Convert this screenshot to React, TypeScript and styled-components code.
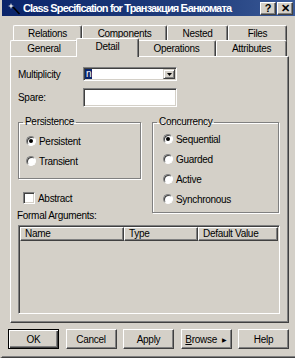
import styled, { createGlobalStyle } from 'styled-components'
import { FC, ReactNode } from 'react'

const FACE = '#d4d0c8'
const SHADOW = '#808080'
const DARK = '#404040'
const LIGHT = '#ffffff'

const GlobalStyle = createGlobalStyle`
  html, body {
    margin: 0;
    padding: 0;
    background: ${FACE};
    overflow: hidden;
  }
`

const Window = styled.div`
  width: 295px;
  height: 358px;
  box-sizing: border-box;
  background: ${FACE};
  border-left: 2px solid ${FACE};
  border-bottom: 1px solid ${DARK};
  box-shadow: inset 0 -1px ${SHADOW};
  display: flex;
  flex-direction: column;
  font-family: "Liberation Sans", Arial, sans-serif;
  font-size: 10px;
  letter-spacing: -0.3px;
  color: #000;
`

const TitleBar = styled.div`
  height: 16px;
  display: flex;
  align-items: center;
  padding: 0 2px 0 6px;
  background: linear-gradient(90deg, #0a246a 0%, #23407e 70%, #3a5a98 100%);
  color: #fff;
`

const TitleText = styled.span`
  flex: 1;
  margin-left: 2px;
  font-size: 11px;
  font-weight: bold;
  letter-spacing: -0.85px;
  white-space: nowrap;
  overflow: hidden;
`

const CaptionButtons = styled.div`
  display: flex;
  gap: 1px;
`

const CaptionButton = styled.div`
  width: 16px;
  height: 13px;
  box-sizing: border-box;
  background: ${FACE};
  border: 1px solid;
  border-color: ${LIGHT} ${DARK} ${DARK} ${LIGHT};
  box-shadow: inset -1px -1px ${SHADOW};
  display: flex;
  align-items: center;
  justify-content: center;
  color: #000;
  font-size: 11px;
  font-weight: bold;
  letter-spacing: 0;
  line-height: 1;
`

const Body = styled.div`
  display: flex;
  flex-direction: column;
  padding-top: 9px;
`

const TabRow = styled.div<{ $indent: number }>`
  display: flex;
  margin-left: ${({ $indent }) => $indent}px;
  height: ${({ $indent }) => ($indent > 10 ? 15 : 16)}px;
`

const Tab = styled.div<{ $width: number; $active?: boolean }>`
  width: ${({ $width, $active }) => $width + ($active ? 4 : 0)}px;
  flex: none;
  box-sizing: border-box;
  height: ${({ $active }) => ($active ? 19 : 16)}px;
  margin: ${({ $active }) => ($active ? '-2px -2px 0 -2px' : '0')};
  padding-bottom: ${({ $active }) => ($active ? 3 : 0)}px;
  background: ${FACE};
  border-top: 1px solid ${LIGHT};
  border-left: 1px solid ${LIGHT};
  border-right: 1px solid ${DARK};
  border-radius: 2px 2px 0 0;
  box-shadow: inset -1px 0 ${SHADOW};
  display: flex;
  align-items: center;
  justify-content: center;
  position: relative;
  z-index: ${({ $active }) => ($active ? 2 : 0)};
`

const Panel = styled.div`
  margin-left: 8px;
  width: 279px;
  height: 267px;
  box-sizing: border-box;
  border: 1px solid;
  border-color: ${LIGHT} ${DARK} ${DARK} ${LIGHT};
  box-shadow: inset -1px -1px ${SHADOW};
  padding: 10px 0 0 7px;
  display: flex;
  flex-direction: column;
`

const FieldRow = styled.div<{ $gap?: number }>`
  display: flex;
  align-items: center;
  margin-top: ${({ $gap }) => $gap ?? 0}px;
`

const FieldLabel = styled.span`
  width: 65px;
  flex: none;
`

const Sunken = styled.div<{ $height: number }>`
  width: 94px;
  height: ${({ $height }) => $height}px;
  box-sizing: border-box;
  background: #fff;
  border: 1px solid;
  border-color: ${SHADOW} ${LIGHT} ${LIGHT} ${SHADOW};
  box-shadow: inset 1px 1px ${DARK}, inset -1px -1px ${FACE};
  display: flex;
  align-items: stretch;
  padding: 1px;
`

const Selected = styled.span`
  background: #0a246a;
  color: #fff;
  line-height: 10px;
  padding: 0 1px;
`

const ComboSpacer = styled.span`
  flex: 1;
`

const DropButton = styled.div`
  width: 12px;
  box-sizing: border-box;
  background: ${FACE};
  border: 1px solid;
  border-color: ${FACE} ${DARK} ${DARK} ${FACE};
  box-shadow: inset 1px 1px ${LIGHT}, inset -1px -1px ${SHADOW};
  display: flex;
  align-items: center;
  justify-content: center;
`

const GroupsRow = styled.div`
  display: flex;
  gap: 11px;
  margin-top: 9px;
  align-items: flex-start;
`

const Column = styled.div`
  display: flex;
  flex-direction: column;
`

const GroupBox = styled.fieldset<{ $width: number; $top: number; $bottom: number }>`
  width: ${({ $width }) => $width}px;
  box-sizing: border-box;
  margin: 0;
  padding: ${({ $top, $bottom }) => `${$top}px 4px ${$bottom}px`};
  border: 1px solid ${SHADOW};
  box-shadow: inset 1px 1px ${LIGHT}, 1px 1px ${LIGHT};
  display: flex;
  flex-direction: column;
  gap: 8px;
`

const Legend = styled.legend`
  padding: 0 2px;
  line-height: 12px;
`

const OptionRow = styled.label<{ $indent: number }>`
  display: flex;
  align-items: center;
  gap: 3px;
  height: 12px;
  padding-left: ${({ $indent }) => $indent}px;
`

const RadioMark = styled.span<{ $checked?: boolean }>`
  width: 10px;
  height: 10px;
  box-sizing: border-box;
  flex: none;
  border-radius: 50%;
  background: #fff;
  border: 1px solid;
  border-color: ${SHADOW} ${LIGHT} ${LIGHT} ${SHADOW};
  box-shadow: inset 1px 1px ${DARK};
  display: flex;
  align-items: center;
  justify-content: center;
  &::after {
    content: '';
    width: 4px;
    height: 4px;
    border-radius: 50%;
    background: ${({ $checked }) => ($checked ? '#000' : 'transparent')};
  }
`

const CheckMark = styled.span`
  width: 12px;
  height: 12px;
  box-sizing: border-box;
  flex: none;
  background: #fff;
  border: 1px solid;
  border-color: ${SHADOW} ${LIGHT} ${LIGHT} ${SHADOW};
  box-shadow: inset 1px 1px ${DARK}, inset -1px -1px ${FACE};
`

const CheckRow = styled.label`
  display: flex;
  align-items: center;
  gap: 3px;
  height: 12px;
  margin-top: 13px;
  padding-left: 5px;
`

const Caption = styled.div`
  height: 12px;
  line-height: 12px;
  margin-top: 6px;
  margin-left: -1px;
`

const ListBox = styled.div`
  width: 262px;
  height: 89px;
  box-sizing: border-box;
  margin-top: 3px;
  border: 1px solid;
  border-color: ${SHADOW} ${LIGHT} ${LIGHT} ${SHADOW};
  box-shadow: inset 1px 1px ${DARK}, inset -1px -1px ${FACE};
  padding: 1px;
  background: ${FACE};
`

const HeaderRow = styled.div`
  display: flex;
  height: 14px;
`

const HeaderCell = styled.div<{ $width?: number }>`
  ${({ $width }) => ($width ? `width: ${$width}px; flex: none;` : 'flex: 1;')}
  box-sizing: border-box;
  border: 1px solid;
  border-color: ${LIGHT} ${DARK} ${DARK} ${LIGHT};
  box-shadow: inset -1px -1px ${SHADOW};
  padding-left: 4px;
  line-height: 12px;
  white-space: nowrap;
`

const ButtonBar = styled.div`
  display: flex;
  gap: 6.5px;
  margin: 6px 0 0 6px;
`

const Button = styled.div<{ $default?: boolean }>`
  width: 51px;
  height: 20px;
  box-sizing: border-box;
  background: ${FACE};
  border: 1px solid;
  border-color: ${({ $default }) =>
    $default ? '#000' : `${LIGHT} ${DARK} ${DARK} ${LIGHT}`};
  box-shadow: ${({ $default }) =>
    $default
      ? `inset 1px 1px ${LIGHT}, inset -1px -1px ${DARK}, inset -2px -2px ${SHADOW}`
      : `inset -1px -1px ${SHADOW}`};
  display: flex;
  align-items: center;
  justify-content: center;
  gap: 5px;
`

const Arrow = styled.span`
  font-size: 6px;
`

const WandIcon: FC = () => (
  <svg width="13" height="13" viewBox="0 0 13 13">
    <line x1="5" y1="5" x2="11.5" y2="12" stroke="#000" strokeWidth="1.6" />
    <path d="M3 1 L3.8 3.2 L6 4 L3.8 4.8 L3 7 L2.2 4.8 L0 4 L2.2 3.2 Z" fill="#e8e8e8" />
  </svg>
)

const Radio: FC<{ checked?: boolean; indent: number; children: ReactNode }> = ({
  checked,
  indent,
  children,
}) => (
  <OptionRow $indent={indent}>
    <RadioMark $checked={checked} />
    <span>{children}</span>
  </OptionRow>
)

const backTabs = [
  { label: 'Relations', width: 69 },
  { label: 'Components', width: 85 },
  { label: 'Nested', width: 61 },
  { label: 'Files', width: 59 },
]

const frontTabs = [
  { label: 'General', width: 68 },
  { label: 'Detail', width: 59, active: true },
  { label: 'Operations', width: 79 },
  { label: 'Attributes', width: 71 },
]

export default function App() {
  return (
    <>
      <GlobalStyle />
      <Window>
        <TitleBar>
          <WandIcon />
          <TitleText>Class Specification for Транзакция Банкомата</TitleText>
          <CaptionButtons>
            <CaptionButton>?</CaptionButton>
            <CaptionButton>✕</CaptionButton>
          </CaptionButtons>
        </TitleBar>
        <Body>
          <TabRow $indent={11}>
            {backTabs.map((t) => (
              <Tab key={t.label} $width={t.width}>
                {t.label}
              </Tab>
            ))}
          </TabRow>
          <TabRow $indent={8}>
            {frontTabs.map((t) => (
              <Tab key={t.label} $width={t.width} $active={t.active}>
                {t.label}
              </Tab>
            ))}
          </TabRow>
          <Panel>
            <FieldRow>
              <FieldLabel>Multiplicity</FieldLabel>
              <Sunken $height={14}>
                <Selected>n</Selected>
                <ComboSpacer />
                <DropButton>
                  <svg width="5" height="3" viewBox="0 0 5 3">
                    <path d="M0 0 H5 L2.5 3 Z" fill="#000" />
                  </svg>
                </DropButton>
              </Sunken>
            </FieldRow>
            <FieldRow $gap={7}>
              <FieldLabel>Spare:</FieldLabel>
              <Sunken $height={19} />
            </FieldRow>
            <GroupsRow>
              <Column>
                <GroupBox $width={123} $top={7} $bottom={11}>
                  <Legend>Persistence</Legend>
                  <Radio checked indent={3}>
                    Persistent
                  </Radio>
                  <Radio indent={3}>Transient</Radio>
                </GroupBox>
                <CheckRow>
                  <CheckMark />
                  <span>Abstract</span>
                </CheckRow>
                <Caption>Formal Arguments:</Caption>
              </Column>
              <GroupBox $width={127} $top={5} $bottom={7}>
                <Legend>Concurrency</Legend>
                <Radio checked indent={6}>
                  Sequential
                </Radio>
                <Radio indent={6}>Guarded</Radio>
                <Radio indent={6}>Active</Radio>
                <Radio indent={6}>Synchronous</Radio>
              </GroupBox>
            </GroupsRow>
            <ListBox>
              <HeaderRow>
                <HeaderCell $width={104}>Name</HeaderCell>
                <HeaderCell $width={74}>Type</HeaderCell>
                <HeaderCell>Default Value</HeaderCell>
              </HeaderRow>
            </ListBox>
          </Panel>
          <ButtonBar>
            <Button $default>OK</Button>
            <Button>Cancel</Button>
            <Button>Apply</Button>
            <Button>
              <span>
                <u>B</u>rowse
              </span>
              <Arrow>▶</Arrow>
            </Button>
            <Button>Help</Button>
          </ButtonBar>
        </Body>
      </Window>
    </>
  )
}
